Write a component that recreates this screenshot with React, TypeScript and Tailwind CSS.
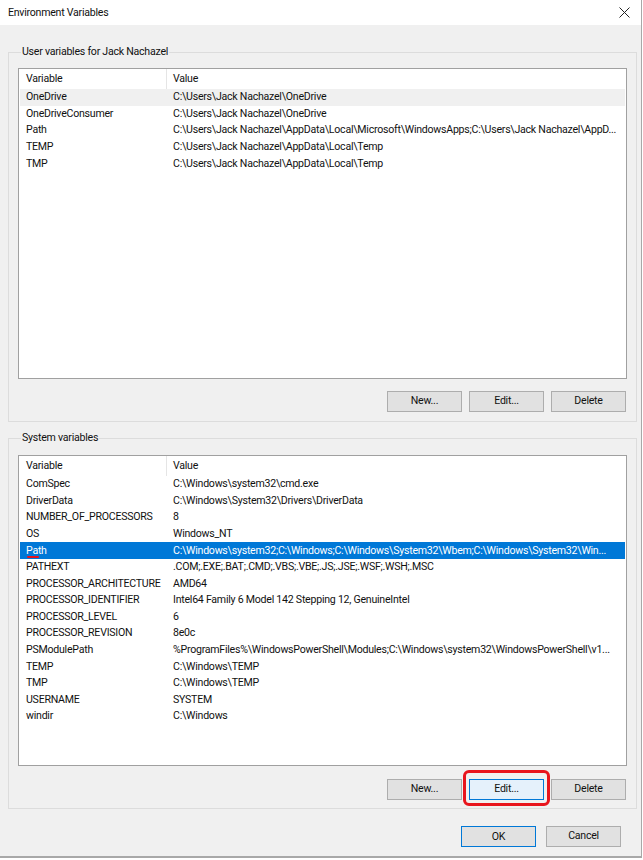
import React from 'react';

const USER_VARS = [
  ['OneDrive', 'C:\\Users\\Jack Nachazel\\OneDrive'],
  ['OneDriveConsumer', 'C:\\Users\\Jack Nachazel\\OneDrive'],
  ['Path', 'C:\\Users\\Jack Nachazel\\AppData\\Local\\Microsoft\\WindowsApps;C:\\Users\\Jack Nachazel\\AppD...'],
  ['TEMP', 'C:\\Users\\Jack Nachazel\\AppData\\Local\\Temp'],
  ['TMP', 'C:\\Users\\Jack Nachazel\\AppData\\Local\\Temp'],
];

const SYSTEM_VARS = [
  ['ComSpec', 'C:\\Windows\\system32\\cmd.exe'],
  ['DriverData', 'C:\\Windows\\System32\\Drivers\\DriverData'],
  ['NUMBER_OF_PROCESSORS', '8'],
  ['OS', 'Windows_NT'],
  ['Path', 'C:\\Windows\\system32;C:\\Windows;C:\\Windows\\System32\\Wbem;C:\\Windows\\System32\\Win...'],
  ['PATHEXT', '.COM;.EXE;.BAT;.CMD;.VBS;.VBE;.JS;.JSE;.WSF;.WSH;.MSC'],
  ['PROCESSOR_ARCHITECTURE', 'AMD64'],
  ['PROCESSOR_IDENTIFIER', 'Intel64 Family 6 Model 142 Stepping 12, GenuineIntel'],
  ['PROCESSOR_LEVEL', '6'],
  ['PROCESSOR_REVISION', '8e0c'],
  ['PSModulePath', '%ProgramFiles%\\WindowsPowerShell\\Modules;C:\\Windows\\system32\\WindowsPowerShell\\v1...'],
  ['TEMP', 'C:\\Windows\\TEMP'],
  ['TMP', 'C:\\Windows\\TEMP'],
  ['USERNAME', 'SYSTEM'],
  ['windir', 'C:\\Windows'],
];

function WinButton({ label, focused = false }: { label: string; focused?: boolean }) {
  return (
    <button
      className={`w-[75px] h-[21px] border leading-none ${
        focused ? 'bg-[#e5f1fb] border-[#0078d7]' : 'bg-[#e1e1e1] border-[#adadad]'
      }`}
    >
      {label}
    </button>
  );
}

function VarList({ rows, selected, active }: { rows: string[][]; selected: number; active: boolean }) {
  return (
    <div className="h-[311px] bg-white border border-[#a0a0a0] px-px overflow-hidden">
      <div className="flex h-[20px] items-center">
        <div className="w-[147px] h-full pl-[6px] flex items-center border-r border-[#e5e5e5]">Variable</div>
        <div className="flex-1 pl-[6px]">Value</div>
      </div>
      {rows.map(([name, value], i) => {
        const isSel = i === selected;
        const rowCls = isSel ? (active ? 'bg-[#0078d7] text-white' : 'bg-[#f0f0f0]') : '';
        return (
          <div key={name + i} className={`flex h-[16.57px] items-center whitespace-nowrap ${rowCls}`}>
            <div className="w-[147px] shrink-0 pl-[6px] relative">
              {name}
              {isSel && active && (
                <span className="absolute left-[7px] top-[13px] w-[12px] h-[2px] bg-[#e8141c] rounded-full" />
              )}
            </div>
            <div className="flex-1 min-w-0 pl-[6px] overflow-hidden">{value}</div>
          </div>
        );
      })}
    </div>
  );
}

export default function App() {
  return (
    <div
      className="w-[643px] h-[860px] bg-white text-[10.6px] tracking-[-0.25px] text-[#111]"
      style={{ fontFamily: 'Roboto, "Noto Sans", sans-serif' }}
    >
      <div className="w-[642px] h-[858px] flex flex-col border-r border-b-2 border-[#a8a8a8] bg-[#f0f0f0]">
        {/* title bar */}
        <div className="h-[25px] bg-white flex items-center justify-between pl-[8px] pr-[9px] shrink-0">
          <span>Environment Variables</span>
          <svg width="11" height="11" viewBox="0 0 11 11" className="mr-[2px]">
            <path d="M0.5 0.5L10.5 10.5M10.5 0.5L0.5 10.5" stroke="#222" strokeWidth="1" />
          </svg>
        </div>

        <div className="flex flex-col px-[8px] pt-[19px]">
          <fieldset className="min-w-0 border border-[#dcdcdc] px-[9px] pb-[9px] pt-[8px] w-[629px]">
            <legend className="ml-[3px] px-[1px] leading-[16px]">User variables for Jack Nachazel</legend>
            <VarList rows={USER_VARS} selected={0} active={false} />
            <div className="flex justify-end gap-[7px] mt-[12px] pr-px">
              <WinButton label="New..." />
              <WinButton label="Edit..." />
              <WinButton label="Delete" />
            </div>
          </fieldset>

          <fieldset className="min-w-0 border border-[#dcdcdc] px-[9px] pb-[8px] pt-[9px] mt-[8px] w-[629px]">
            <legend className="ml-[3px] px-[1px] leading-[16px]">System variables</legend>
            <VarList rows={SYSTEM_VARS} selected={4} active={true} />
            <div className="flex justify-end gap-[7px] mt-[13px] pr-px">
              <WinButton label="New..." />
              <div className="relative">
                <WinButton label="Edit..." focused />
                <span className="absolute -left-[6px] -top-[9px] w-[87px] h-[36px] border-[3px] border-[#e8141c] rounded-[6px]" />
              </div>
              <WinButton label="Delete" />
            </div>
          </fieldset>

          <div className="flex justify-end gap-[10px] mt-[17px] pr-[12px]">
            <button className="w-[75px] h-[21px] border border-[#0078d7] bg-[#e1e1e1]">OK</button>
            <WinButton label="Cancel" />
          </div>
        </div>
      </div>
    </div>
  );
}
